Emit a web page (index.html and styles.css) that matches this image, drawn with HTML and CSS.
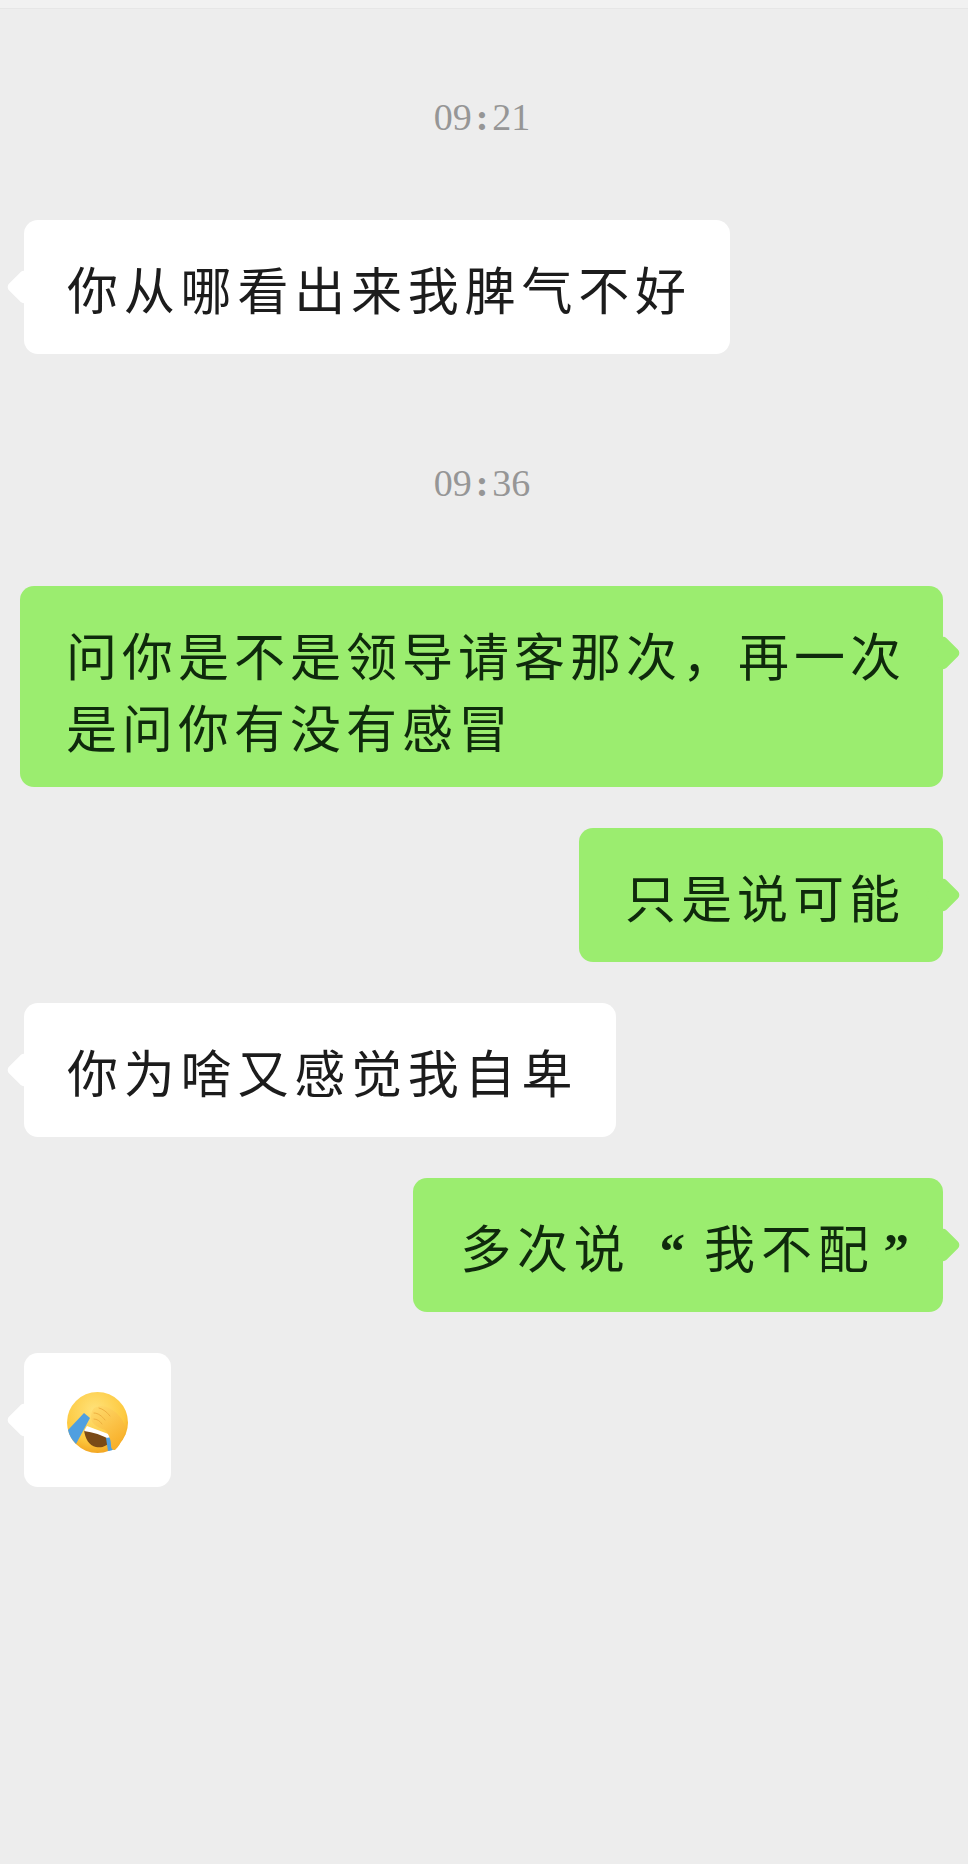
FILE: index.html
```html
<!DOCTYPE html>
<html lang="zh-CN">
<head>
<meta charset="utf-8">
<title>聊天记录</title>
<link rel="stylesheet" href="styles.css">
</head>
<body>
<div class="topbar"></div>
<main class="chat">
  <div class="time">09<span class="colon">:</span>21</div>
  <div class="group">
    <div class="msg in"><div class="bubble">你从哪看出来我脾气不好</div></div>
  </div>
  <div class="time">09<span class="colon">:</span>36</div>
  <div class="group">
    <div class="msg out"><div class="bubble two">问你是不是领导请客那次，再一次<br>是问你有没有感冒</div></div>
    <div class="msg out"><div class="bubble short">只是说可能</div></div>
    <div class="msg in"><div class="bubble">你为啥又感觉我自卑</div></div>
    <div class="msg out"><div class="bubble quoted">多次说<span class="quote open">“</span>我不配<span class="quote close">”</span></div></div>
    <div class="msg in"><div class="bubble emoji-bubble">
      <svg class="emoji" viewBox="0 0 61 61" aria-label="捂脸">
        <defs>
          <radialGradient id="face" cx="45%" cy="30%" r="72%">
            <stop offset="0" stop-color="#ffe27a"/>
            <stop offset="0.7" stop-color="#fdc93f"/>
            <stop offset="1" stop-color="#f2a320"/>
          </radialGradient>
          <linearGradient id="hand" x1="0" y1="0" x2="0.6" y2="1">
            <stop offset="0" stop-color="#ffdc70"/>
            <stop offset="1" stop-color="#f8b02a"/>
          </linearGradient>
        </defs>
        <circle cx="30.5" cy="30.5" r="30.5" fill="url(#face)"/>
        <path d="M17 38 C24 38 34 42 44 47 C41 55 34 56 29 55 C22 54 18 46 17 38Z" fill="#7a4a17"/>
        <path d="M20 34 L44 43 L44 48 C35 43 26 40 17 39Z" fill="#fff"/>
        <path d="M17 21 L23 26 L9 52 C5 48 2 43 1 38 Z" fill="#4f9fe0"/>
        <path d="M39 46 L45 45 L48 57 C45 58 43 59 41 59 Z" fill="#4f9fe0"/>
        <path d="M24 25 C24 20 26 15 30 15 C33 13 38 14 42 16 C50 20 56 27 58 34 C58 41 55 52 48 58 C45 58 44 56 44 53 C44 47 41 41 38 38 C33 36 30 35 28 33 C25 31 24 28 24 25 Z" fill="url(#hand)"/>
        <path d="M27 21 C31 21 35 24 38 28 M27 27 C30 27 33 29 35 32 M32 16 C36 17 40 20 43 24" fill="none" stroke="#eeb040" stroke-width="1" stroke-linecap="round"/>
      </svg>
    </div></div>
  </div>
</main>
</body>
</html>
```
FILE: styles.css
```css
html, body {
  margin: 0;
  padding: 0;
}
body {
  width: 968px;
  min-height: 1864px;
  background: #ededed;
  font-family: "Noto Sans CJK SC", "Noto Sans CJK TC", sans-serif;
  color: #1c1c1c;
}
.topbar {
  height: 8px;
  background: #f1f1f1;
  border-bottom: 1px solid #e6e6e6;
}
.chat {
  padding-top: 85px;
}
.time {
  height: 46px;
  line-height: 46px;
  text-align: center;
  font-family: "Liberation Serif", serif;
  font-size: 38px;
  color: #969696;
  margin-left: -4px;
  margin-bottom: 80px;
}
.colon {
  font-weight: 700;
  padding: 0 4px;
}
.group {
  display: flex;
  flex-direction: column;
  gap: 41px;
  margin-bottom: 106px;
}
.msg {
  display: flex;
}
.msg.in {
  justify-content: flex-start;
  padding-left: 24px;
}
.msg.out {
  justify-content: flex-end;
  padding-right: 25px;
}
.bubble {
  position: relative;
  box-sizing: border-box;
  height: 134px;
  padding: 32px 38px 30px 43px;
  border-radius: 14px;
  background: #ffffff;
  font-size: 51px;
  line-height: 72px;
  letter-spacing: 5.8px;
  white-space: nowrap;
}
.bubble.two {
  height: 201px;
  padding: 32px 37px 25px 46px;
  letter-spacing: 5px;
}
.bubble.short {
  padding-left: 46px;
  letter-spacing: 5px;
}
.bubble.quoted {
  padding-left: 47px;
}
.bubble::before {
  content: "";
  position: absolute;
  top: 54px;
  width: 26px;
  height: 26px;
  border-radius: 5px;
  background: inherit;
  transform: rotate(45deg);
}
.msg.in .bubble::before {
  left: -13px;
}
.msg.out .bubble {
  background: #9bed6f;
  color: #0f2a0c;
}
.msg.out .bubble::before {
  right: -13px;
}
.quote {
  font-family: "Liberation Serif", serif;
  font-weight: 700;
  letter-spacing: 0;
  line-height: 0;
}
.quote.open {
  margin-left: 29px;
  margin-right: 19px;
}
.quote.close {
  margin-left: 9px;
  margin-right: -4px;
}
.emoji-bubble {
  display: flex;
  align-items: center;
  padding: 4px 43px 0;
}
.emoji {
  display: block;
  width: 61px;
  height: 61px;
}
```
